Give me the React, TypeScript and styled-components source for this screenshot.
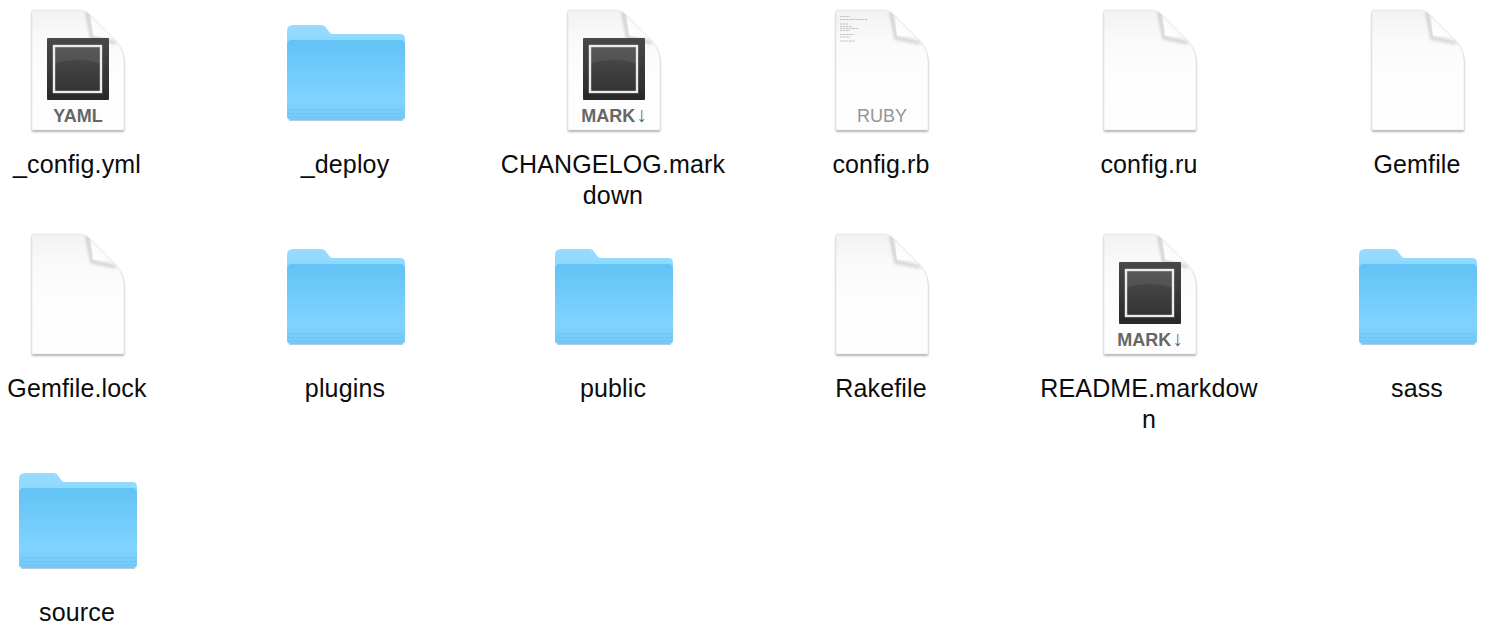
import React from "react";
import styled, { createGlobalStyle } from "styled-components";

const Global = createGlobalStyle`
  html, body { margin: 0; padding: 0; background: #fff; overflow: hidden; }
  body { font-family: "Liberation Sans", Arial, sans-serif; }
`;

const Grid = styled.main`
  display: grid;
  grid-template-columns: repeat(6, 154px);
  grid-auto-rows: 224px;
  column-gap: 114px;
  width: 1494px;
  height: 634px;
  overflow: hidden;
`;

const Item = styled.div`
  display: flex;
  flex-direction: column;
  align-items: center;
`;

const IconBox = styled.svg`
  width: 130px;
  height: 148px;
  flex: none;
  display: block;
  overflow: visible;
`;

const Label = styled.div`
  width: 226px;
  flex: none;
  padding-top: 0.5px;
  font-size: 25px;
  letter-spacing: 0.15px;
  line-height: 31.5px;
  color: #0c0c0c;
  text-align: center;
  word-break: break-all;
`;

const Defs = styled.svg`
  position: absolute;
  width: 0;
  height: 0;
`;

const BadgeText = styled.text<{ $muted?: boolean }>`
  font-family: "Liberation Sans", Arial, sans-serif;
  font-size: 18px;
  font-weight: ${(p) => (p.$muted ? 400 : 700)};
  fill: ${(p) => (p.$muted ? "#959595" : "#666")};
  text-anchor: middle;
`;

const Arrow = styled.tspan`
  font-weight: 400;
  font-size: 21px;
`;

const sheet = "M20 11 Q20 10 21 10 L68 10 Q74 10 79 16 L99 36 Q111 46 112 60 L112 130 L20 130 Z";

const Sheet = () => (
  <>
    <path d={sheet} fill="#000" opacity="0.42" transform="translate(0 1.5)" filter="url(#blur1)" />
    <path d={sheet} fill="url(#paper)" stroke="#e7e7e7" strokeWidth="0.8" />
    <g clipPath="url(#sheetClip)">
      <path d="M75 12 Q78 28 80 38 Q92 40 104 43" fill="none" stroke="#000" strokeOpacity="0.16" strokeWidth="3.5" filter="url(#blur2)" />
    </g>
    <path d="M79 17 L99 36.5 Q90 36.5 81 35.5 Q80 26 79 17 Z" fill="url(#fold)" />
  </>
);

const Badge = ({ children }: { children: React.ReactNode }) => (
  <>
    <Sheet />
    <rect x="35" y="38" width="62" height="62" rx="1" fill="url(#dark)" filter="url(#blur0)" />
    <rect x="42" y="46" width="47" height="46" fill="url(#inner)" />
    <path d="M42 46 H89 V64 Q66 56 42 64 Z" fill="#fff" opacity="0.07" />
    <rect x="42" y="46" width="47" height="46" fill="none" stroke="#ececec" strokeWidth="2.4" />
    <BadgeText x="66" y="122">{children}</BadgeText>
  </>
);

const RubyDoc = () => (
  <>
    <Sheet />
    <g stroke="#b4b4b4" strokeWidth="0.8" strokeDasharray="2.4 0.7">
      <path d="M24 16.5 H34" />
      <path d="M24 19.5 H51" />
      <path d="M24 24 H32" />
      <path d="M24 26.5 H36" />
      <path d="M24 28.5 H42" />
      <path d="M24 30.5 H34" />
      <path d="M24 34.5 H38" />
      <path d="M24 37 H34" />
      <path d="M24 41 H39" />
    </g>
    <BadgeText $muted x="66" y="122" textLength="50">RUBY</BadgeText>
  </>
);

const Folder = () => (
  <>
    <path d="M7 31 Q7 25 13 25 L41 25 Q45 25 47 29 L50 33 Q51 34 53 34 L120 34 Q125 34 125 39 L125 60 L7 60 Z" fill="url(#tab)" />
    <path d="M7 45 Q7 40 12 40 L120 40 Q125 40 125 45 L125 116 Q125 120 121 120 L11 120 Q7 120 7 116 Z" fill="url(#body)" />
    <path d="M7 110 H125 M7 113.5 H125 M7 117 H125" stroke="#58b4e6" strokeOpacity="0.3" strokeWidth="1" />
    <path d="M9 120.5 H123" stroke="#7d9fb5" strokeOpacity="0.55" strokeWidth="1" />
  </>
);

const mark = (
  <Badge>
    MARK<Arrow dx="1">↓</Arrow>
  </Badge>
);

const icons = {
  yaml: <Badge>YAML</Badge>,
  mark,
  ruby: <RubyDoc />,
  doc: <Sheet />,
  folder: <Folder />,
};

type Kind = keyof typeof icons;

const files: { name: string; kind: Kind }[] = [
  { name: "_config.yml", kind: "yaml" },
  { name: "_deploy", kind: "folder" },
  { name: "CHANGELOG.markdown", kind: "mark" },
  { name: "config.rb", kind: "ruby" },
  { name: "config.ru", kind: "doc" },
  { name: "Gemfile", kind: "doc" },
  { name: "Gemfile.lock", kind: "doc" },
  { name: "plugins", kind: "folder" },
  { name: "public", kind: "folder" },
  { name: "Rakefile", kind: "doc" },
  { name: "README.markdown", kind: "mark" },
  { name: "sass", kind: "folder" },
  { name: "source", kind: "folder" },
];

export default function App() {
  return (
    <>
      <Global />
      <Defs aria-hidden="true">
        <defs>
          <clipPath id="sheetClip">
            <path d={sheet} />
          </clipPath>
          <linearGradient id="paper" x1="0" y1="0" x2="0" y2="1">
            <stop offset="0" stopColor="#f2f2f2" />
            <stop offset="0.25" stopColor="#fafafa" />
            <stop offset="0.6" stopColor="#fefefe" />
            <stop offset="1" stopColor="#fdfdfd" />
          </linearGradient>
          <linearGradient id="fold" x1="0.2" y1="0.9" x2="0.8" y2="0.2">
            <stop offset="0" stopColor="#ffffff" />
            <stop offset="1" stopColor="#f6f6f6" />
          </linearGradient>
          <linearGradient id="dark" x1="0" y1="0" x2="0" y2="1">
            <stop offset="0" stopColor="#484848" />
            <stop offset="1" stopColor="#292929" />
          </linearGradient>
          <linearGradient id="inner" x1="0" y1="0" x2="0" y2="1">
            <stop offset="0" stopColor="#4e4e4e" />
            <stop offset="1" stopColor="#333" />
          </linearGradient>
          <linearGradient id="tab" x1="0" y1="0" x2="0" y2="1">
            <stop offset="0" stopColor="#96dcff" />
            <stop offset="1" stopColor="#86d3fd" />
          </linearGradient>
          <linearGradient id="body" x1="0" y1="0" x2="0" y2="1">
            <stop offset="0" stopColor="#62c3f6" />
            <stop offset="0.75" stopColor="#80d3fe" />
            <stop offset="1" stopColor="#72cafa" />
          </linearGradient>
          <filter id="blur0" x="-5%" y="-5%" width="110%" height="110%">
            <feGaussianBlur stdDeviation="0.4" />
          </filter>
          <filter id="blur1" x="-10%" y="-10%" width="120%" height="120%">
            <feGaussianBlur stdDeviation="0.9" />
          </filter>
          <filter id="blur2" x="-30%" y="-30%" width="160%" height="160%">
            <feGaussianBlur stdDeviation="1.6" />
          </filter>
        </defs>
      </Defs>
      <Grid>
        {files.map((f) => (
          <Item key={f.name}>
            <IconBox viewBox="0 0 130 148">{icons[f.kind]}</IconBox>
            <Label>{f.name}</Label>
          </Item>
        ))}
      </Grid>
    </>
  );
}
